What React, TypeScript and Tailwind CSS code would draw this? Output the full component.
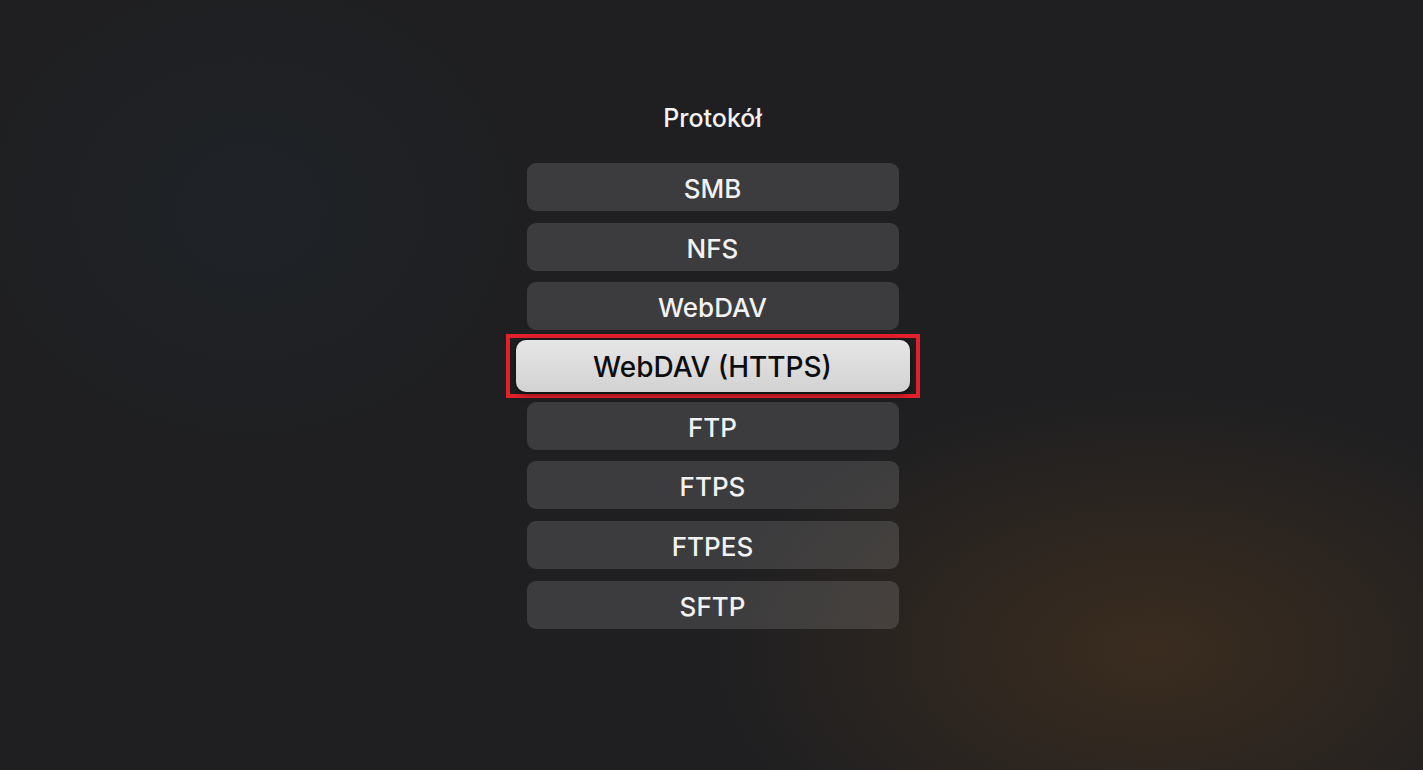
const protocols = ["SMB", "NFS", "WebDAV", "WebDAV (HTTPS)", "FTP", "FTPS", "FTPES", "SFTP"];
const selected = "WebDAV (HTTPS)";

function ProtocolRow({ label }: { label: string }) {
  if (label === selected) {
    return (
      <div className="-mx-[21px] -my-[8px] border-4 border-[#e3202b] px-[6px] py-[2px]">
        <div className="flex h-[52px] items-center justify-center rounded-[10px] bg-gradient-to-b from-[#e6e6e6] to-[#d2d2d2] pt-[2px] text-[28px] font-medium text-[#0d0d0d] shadow-[0_2px_6px_rgba(0,0,0,0.6)]">
          {label}
        </div>
      </div>
    );
  }
  return (
    <div className="flex h-[48px] items-center justify-center rounded-[9px] bg-white/[0.13] pt-[3px] text-[26px] font-medium text-[#f2f2f2]">
      {label}
    </div>
  );
}

export default function App() {
  return (
    <div
      className="flex h-[770px] w-full flex-col items-center bg-[#1f1f21] bg-[radial-gradient(ellipse_440px_260px_at_1150px_650px,rgba(100,64,28,0.4),transparent),radial-gradient(ellipse_300px_260px_at_250px_210px,rgba(30,40,48,0.4),transparent)] pl-[2px] pt-[102px]"
      style={{ fontFamily: "Inter, 'Noto Sans', sans-serif" }}
    >
      <h1 className="text-[25px] font-medium leading-[32px] text-[#f2f2f2]">Protokół</h1>
      <div className="mt-[29px] flex w-[372px] flex-col gap-[11.7px]">
        {protocols.map((p) => (
          <ProtocolRow key={p} label={p} />
        ))}
      </div>
    </div>
  );
}
